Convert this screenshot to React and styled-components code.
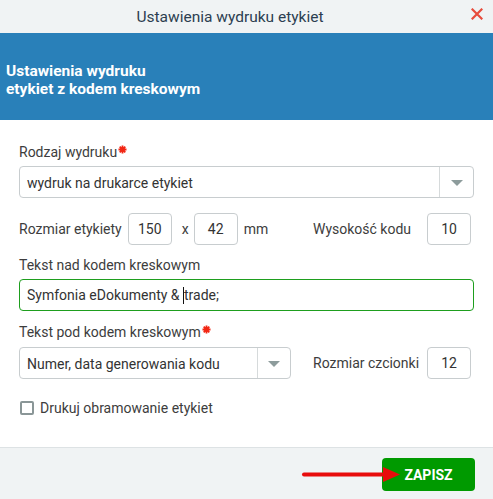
import React from "react";
import styled, { createGlobalStyle } from "styled-components";

const Global = createGlobalStyle`
  html, body { margin: 0; padding: 0; background: #fff; }
  body { font-family: Roboto, "Liberation Sans", sans-serif; }
  * { box-sizing: border-box; }
`;

const Dialog = styled.div`
  width: 493px;
  height: 499px;
  display: flex;
  flex-direction: column;
  background: #fff;
  position: relative;
  overflow: hidden;
`;

const TitleBar = styled.div`
  height: 33px;
  flex: none;
  background: #f0f3f4;
  display: flex;
  align-items: center;
`;

const Title = styled.div`
  flex: 1;
  text-align: center;
  font-size: 15.5px;
  color: #2c3e50;
  padding-top: 1px;
`;

const CloseBtn = styled.div`
  width: 33px;
  height: 33px;
  display: flex;
  align-items: center;
  justify-content: center;
  padding-bottom: 5px;
  padding-left: 1px;
`;

const Banner = styled.div`
  height: 87px;
  flex: none;
  background: #2980b9;
  color: #fff;
  font-weight: 700;
  font-size: 15.5px;
  line-height: 18px;
  padding: 7px 6px 0;
  display: flex;
  align-items: center;
`;

const Body = styled.div`
  flex: 1;
  padding: 23px 19px 0;
  display: flex;
  flex-direction: column;
`;

const Label = styled.div`
  font-size: 14px;
  line-height: 18px;
  color: #3d3d3d;
  margin-top: ${(p) => p.$mt || 0}px;
  margin-bottom: ${(p) => p.$mb ?? 5}px;
  display: flex;
  align-items: flex-start;
`;

const Star = styled.svg`
  margin-left: 1px;
  margin-top: 2px;
`;

const Required = () => (
  <Star width="9" height="9" viewBox="0 0 9 9">
    <path
      d="M4.5 0.5 V8.5 M0.5 4.5 H8.5 M1.7 1.7 L7.3 7.3 M7.3 1.7 L1.7 7.3"
      stroke="#f22613"
      strokeWidth="1.8"
    />
  </Star>
);

const Select = styled.div`
  height: 32px;
  width: ${(p) => p.$w || "100%"};
  border: 1px solid #c8cdcf;
  border-radius: 4px;
  display: flex;
  align-items: stretch;
  font-size: 14px;
  color: #333;
`;

const SelectValue = styled.div`
  flex: 1;
  display: flex;
  align-items: center;
  padding-left: 7px;
  padding-top: 1px;
`;

const SelectArrow = styled.div`
  width: ${(p) => p.$w || 33}px;
  border-left: 1px solid #d6dadb;
  display: flex;
  align-items: center;
  justify-content: center;
  &::after {
    content: "";
    border-left: 6px solid transparent;
    border-right: 6px solid transparent;
    border-top: 6px solid #8d9c9c;
    margin-top: 2px;
  }
`;

const Row = styled.div`
  display: grid;
  grid-template-columns: 272px 1fr 44px;
  padding-right: 3px;
  align-items: center;
  margin-top: ${(p) => p.$mt || 0}px;
`;

const Inline = styled.div`
  display: flex;
  align-items: center;
  font-size: 14px;
  color: #3d3d3d;
`;

const SideLabel = styled.div`
  padding-left: 22px;
  font-size: 14px;
  color: #3d3d3d;
`;

const NumBox = styled.div`
  width: 44px;
  height: 32px;
  border: 1px solid #c8cdcf;
  border-radius: 4px;
  display: flex;
  align-items: center;
  justify-content: center;
  font-size: 14px;
  color: #333;
  margin-left: ${(p) => p.$ml || 0}px;
  margin-right: ${(p) => p.$mr || 0}px;
`;

const TextInput = styled.div`
  height: 32px;
  border: 1px solid #1e9e1e;
  border-radius: 4px;
  display: flex;
  align-items: center;
  padding-left: 7px;
  font-size: 14px;
  color: #333;
`;

const Caret = styled.span`
  display: inline-block;
  width: 1px;
  height: 17px;
  background: #111;
  vertical-align: middle;
`;

const CheckRow = styled.label`
  display: flex;
  align-items: center;
  margin-top: 21px;
  font-size: 14px;
  color: #3d3d3d;
  padding-left: 1px;
`;

const Box = styled.span`
  width: 14px;
  height: 14px;
  border: 2px solid #8a9697;
  border-radius: 2px;
  margin-right: 6px;
`;

const Footer = styled.div`
  height: 52px;
  flex: none;
  background: #f0f3f4;
  border-top: 1px solid #dde2e4;
  display: flex;
  justify-content: flex-end;
  padding: 10px 18px 0 0;
  position: relative;
`;

const SaveButton = styled.button`
  width: 93px;
  height: 33px;
  background: #009a00;
  border: none;
  border-radius: 4px;
  color: #fff;
  font-family: Roboto, "Liberation Sans", sans-serif;
  font-weight: 700;
  font-size: 14px;
  padding: 0;
`;

const Pointer = styled.svg`
  position: absolute;
  left: 300px;
  top: 18px;
`;

export default function App() {
  return (
    <>
      <Global />
      <Dialog>
        <TitleBar>
          <Title>Ustawienia wydruku etykiet</Title>
          <CloseBtn>
            <svg width="12" height="12" viewBox="0 0 12 12">
              <path d="M1.5 1.5 L10.5 10.5 M10.5 1.5 L1.5 10.5" stroke="#e74c3c" strokeWidth="2.2" strokeLinecap="square" />
            </svg>
          </CloseBtn>
        </TitleBar>
        <Banner>
          <div>
            Ustawienia wydruku
            <br />
            etykiet z kodem kreskowym
          </div>
        </Banner>
        <Body>
          <Label>
            Rodzaj wydruku<Required />
          </Label>
          <Select>
            <SelectValue>wydruk na drukarce etykiet</SelectValue>
            <SelectArrow $w={34} />
          </Select>
          <Row $mt={15}>
            <Inline>
              Rozmiar etykiety
              <NumBox $ml={6} $mr={10}>150</NumBox>x
              <NumBox $ml={5} $mr={6}>42</NumBox>mm
            </Inline>
            <SideLabel>Wysokość kodu</SideLabel>
            <NumBox>10</NumBox>
          </Row>
          <Label $mt={11}>Tekst nad kodem kreskowym</Label>
          <TextInput>
            Symfonia eDokumenty &amp;&nbsp;<Caret />trade;
          </TextInput>
          <Label $mt={12} $mb={6}>
            Tekst pod kodem kreskowym<Required />
          </Label>
          <Row>
            <Select>
              <SelectValue>Numer, data generowania kodu</SelectValue>
              <SelectArrow $w={33} />
            </Select>
            <SideLabel>Rozmiar czcionki</SideLabel>
            <NumBox>12</NumBox>
          </Row>
          <CheckRow>
            <Box />
            Drukuj obramowanie etykiet
          </CheckRow>
        </Body>
        <Footer>
          <SaveButton>ZAPISZ</SaveButton>
          <Pointer width="102" height="18" viewBox="0 0 102 18">
            <line x1="4" y1="8.5" x2="86" y2="8.5" stroke="#e80c0c" strokeWidth="4" strokeLinecap="round" />
            <polygon points="83,1 100,8.5 83,16" fill="#e80c0c" />
          </Pointer>
        </Footer>
      </Dialog>
    </>
  );
}
